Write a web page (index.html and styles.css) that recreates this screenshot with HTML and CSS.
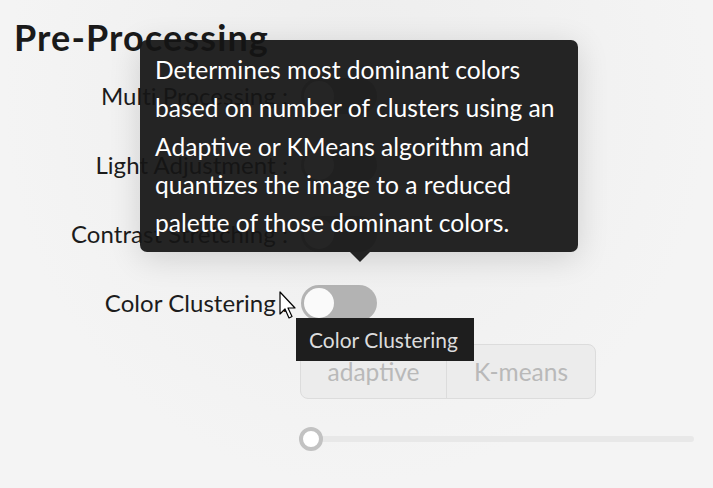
FILE: index.html
```html
<!DOCTYPE html>
<html>
<head>
<meta charset="utf-8">
<link rel="stylesheet" href="styles.css">
</head>
<body>
<div class="page">
  <h1 class="title">Pre-Processing</h1>
  <div class="form">
    <div class="label">Multi Processing :</div>
    <div class="cell"><span class="toggle"><span class="knob"></span></span></div>
    <div class="label">Light Adjustment :</div>
    <div class="cell"><span class="toggle"><span class="knob"></span></span></div>
    <div class="label">Contrast Stretching :</div>
    <div class="cell"><span class="toggle"><span class="knob"></span></span></div>
    <div class="label">Color Clustering :</div>
    <div class="cell"><span class="toggle"><span class="knob"></span></span></div>
    <div class="label"></div>
    <div class="cell seg-cell">
      <div class="segmented">
        <span class="seg">adaptive</span>
        <span class="seg">K-means</span>
      </div>
    </div>
    <div class="label"></div>
    <div class="cell slider-cell">
      <div class="slider"><span class="thumb"></span></div>
    </div>
  </div>

  <div class="popover">
    <p>Determines most dominant colors<br>based on number of clusters using an<br>Adaptive or KMeans algorithm and<br>quantizes the image to a reduced<br>palette of those dominant colors.</p>
    <span class="arrow"></span>
  </div>

  <div class="hint">Color Clustering</div>

  <svg class="cursor" width="22" height="30" viewBox="0 0 22 30">
    <path d="M1 1 L1 23 L6 18 L10 27 L13 25.5 L9 17 L16 17 Z" fill="#fff" stroke="#000" stroke-width="1.2" stroke-linejoin="round"/>
  </svg>
</div>
</body>
</html>
```
FILE: styles.css
```css
html, body {
  margin: 0;
  padding: 0;
}
body {
  background: #f3f3f3;
  font-family: "Lato", "Noto Sans", sans-serif;
  color: #1a1a1a;
  width: 713px;
  height: 488px;
  overflow: hidden;
}
.page {
  position: relative;
  width: 713px;
  height: 488px;
  background: radial-gradient(ellipse at 50% 20%, #ededed 0%, #f4f4f4 70%);
}
.title {
  margin: 0;
  padding: 14px 0 0 14px;
  font-size: 36px;
  font-weight: 700;
  letter-spacing: 1.1px;
  line-height: 46px;
  height: 46px;
}
.form {
  display: grid;
  grid-template-columns: 288px 411px;
  grid-template-rows: 69px 69px 69px 69px 62px 80px;
  margin-top: 1px;
  column-gap: 13px;
}
.label {
  display: flex;
  align-items: center;
  justify-content: flex-end;
  font-size: 24px;
  letter-spacing: 0.05px;
  white-space: nowrap;
  color: #1c1c1c;
}
.cell {
  display: flex;
  align-items: center;
}
.toggle {
  display: block;
  width: 76px;
  height: 36px;
  border-radius: 18px;
  background: #b3b3b3;
  position: relative;
}
.knob {
  position: absolute;
  left: 3px;
  top: 3px;
  width: 30px;
  height: 30px;
  border-radius: 50%;
  background: #fafafa;
}
.seg-cell {
  align-items: flex-end;
}
.segmented {
  display: flex;
  width: 294px;
  height: 53px;
  border: 1px solid #dcdcdc;
  border-radius: 8px;
  background: #ececec;
  margin-left: -1px;
}
.seg {
  display: flex;
  align-items: center;
  justify-content: center;
  font-size: 24.5px;
  color: #b9b9b9;
}
.seg:first-child {
  width: 145px;
  border-right: 1px solid #dcdcdc;
}
.seg:last-child {
  flex: 1;
}
.slider-cell {
  align-items: center;
}
.slider {
  position: relative;
  width: 395px;
  height: 6px;
  border-radius: 3px;
  background: #e8e8e8;
  margin-left: -2px;
}
.thumb {
  position: absolute;
  left: 0;
  top: -9px;
  width: 16px;
  height: 16px;
  border-radius: 50%;
  background: #fff;
  border: 4px solid #c2c2c2;
}
.popover {
  position: absolute;
  left: 140px;
  top: 40px;
  width: 438px;
  height: 212px;
  box-sizing: border-box;
  padding: 11px 10px 0 15px;
  background: rgba(20, 20, 20, 0.93);
  border-radius: 7px;
  box-shadow: 0 6px 32px rgba(0, 0, 0, 0.14);
  color: #fff;
}
.popover p {
  margin: 0;
  font-size: 24.6px;
  line-height: 38.3px;
}
.arrow {
  position: absolute;
  left: 210px;
  bottom: -10px;
  width: 0;
  height: 0;
  border-left: 10px solid transparent;
  border-right: 10px solid transparent;
  border-top: 10px solid rgba(20, 20, 20, 0.93);
}
.hint {
  position: absolute;
  left: 296px;
  top: 318px;
  width: 178px;
  height: 43px;
  box-sizing: border-box;
  background: #1e1e1e;
  color: #dcdcdc;
  font-size: 21px;
  line-height: 43px;
  padding-left: 13px;
}
.cursor {
  position: absolute;
  left: 279px;
  top: 291px;
}
```
